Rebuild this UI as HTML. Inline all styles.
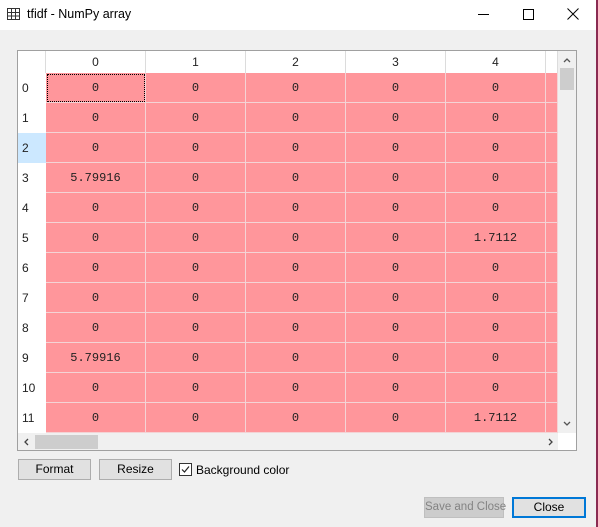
<!DOCTYPE html><html><head><style>
html,body{margin:0;width:598px;height:527px;overflow:hidden}
body{background:#f0f0f0;font-family:"Liberation Sans",sans-serif;position:relative}
.a{position:absolute;white-space:nowrap}
.title{left:0;top:0;width:596px;height:30px;background:#fff}
.cell{position:absolute;background:#ff969b;border-right:1px solid #f4d3d5;border-bottom:1px solid #f4d3d5;box-sizing:border-box;font-family:"Liberation Mono",monospace;font-size:12px;text-align:center;line-height:30px;color:#222}
.hdr{position:absolute;background:#fff;border-right:1px solid #dcdcdc;box-sizing:border-box;font-size:12px;text-align:center;line-height:22px;color:#222}
.rh{position:absolute;left:18px;width:28px;height:30px;background:#fff;font-size:12px;line-height:30px;padding-left:4px;box-sizing:border-box;color:#222}
.btn{position:absolute;background:#e1e1e1;border:1px solid #adadad;box-sizing:border-box;font-size:12px;text-align:center;line-height:19px;color:#000;white-space:nowrap}
</style></head><body>
<div class="a title"></div>
<svg class="a" style="left:7px;top:8px" width="14" height="13"><rect x="0.5" y="0.5" width="12" height="11" fill="none" stroke="#333"/><path d="M0 4.5H13M0 8H13M4.5 0V12M8.5 0V12" stroke="#333"/></svg>
<div class="a" style="left:27px;top:7px;font-size:12.5px;color:#000">tfidf - NumPy array</div>
<div class="a" style="left:478px;top:14px;width:11px;height:1px;background:#000"></div>
<div class="a" style="left:523px;top:9px;width:9px;height:9px;border:1px solid #000"></div>
<svg class="a" style="left:567px;top:8px" width="12" height="12"><path d="M0.5 0.5L11.5 11.5M11.5 0.5L0.5 11.5" stroke="#000"/></svg>
<div class="a" style="left:596px;top:0;width:2px;height:527px;background:#8a2b52"></div>
<div class="a" style="left:17px;top:50px;width:560px;height:401px;border:1px solid #a0a0a0;box-sizing:border-box;background:#fff"></div>
<div id="g"></div>
<div class="a" style="left:558px;top:51px;width:18px;height:382px;background:#f0f0f0"></div>
<div class="a" style="left:560px;top:68px;width:14px;height:22px;background:#cdcdcd"></div>
<svg class="a" style="left:563px;top:57px" width="8" height="6"><path d="M1 5L4 2L7 5" fill="none" stroke="#555" stroke-width="1.3"/></svg>
<svg class="a" style="left:563px;top:421px" width="8" height="6"><path d="M1 1L4 4L7 1" fill="none" stroke="#555" stroke-width="1.3"/></svg>
<div class="a" style="left:18px;top:433px;width:540px;height:17px;background:#f0f0f0"></div>
<div class="a" style="left:35px;top:435px;width:63px;height:14px;background:#cdcdcd"></div>
<svg class="a" style="left:23px;top:438px" width="6" height="8"><path d="M5 1L2 4L5 7" fill="none" stroke="#444" stroke-width="1.3"/></svg>
<svg class="a" style="left:548px;top:438px" width="6" height="8"><path d="M1 1L4 4L1 7" fill="none" stroke="#444" stroke-width="1.3"/></svg>
<div class="btn" style="left:18px;top:459px;width:73px;height:21px">Format</div>
<div class="btn" style="left:99px;top:459px;width:73px;height:21px">Resize</div>
<div class="a" style="left:179px;top:463px;width:13px;height:13px;border:1px solid #333;box-sizing:border-box;background:#fff"></div>
<svg class="a" style="left:180px;top:464px" width="11" height="11"><path d="M2 5.5L4.5 8L9 2.5" fill="none" stroke="#222" stroke-width="1.2"/></svg>
<div class="a" style="left:196px;top:463px;font-size:12px">Background color</div>
<div class="btn" style="left:424px;top:497px;width:80px;height:21px;background:#ccc;border-color:#bfbfbf;color:#838383;font-size:11.5px">Save and Close</div>
<div class="btn" style="left:512px;top:497px;width:74px;height:21px;border:2px solid #0078d7;line-height:17px">Close</div>
<script>
var g=document.getElementById('g'),h='';
var cx=[46,146,246,346,446,546],cw=[100,100,100,100,100,12];
for(var c=0;c<5;c++)h+='<div class="hdr" style="left:'+cx[c]+'px;top:51px;width:100px;height:22px">'+c+'</div>';
h+='<div class="hdr" style="left:546px;top:51px;width:12px;height:22px"></div>';
h+='<div class="hdr" style="left:18px;top:51px;width:28px;height:22px"></div>';
for(var r=0;r<12;r++){var y=73+r*30;
h+='<div class="rh" style="top:'+y+'px;'+(r==2?'background:#cce8ff':'')+'">'+r+'</div>';
for(var c=0;c<6;c++){var t=c<5?'0':'';if(c==0&&(r==3||r==9))t='5.79916';if(c==4&&(r==5||r==11))t='1.7112';
var ex=(r==0&&c==0)?'outline:1px dotted #000;outline-offset:-2px;':'';
h+='<div class="cell" style="left:'+cx[c]+'px;top:'+y+'px;width:'+cw[c]+'px;height:30px;'+ex+'">'+t+'</div>';}}
g.innerHTML=h;
</script>
</body></html>
